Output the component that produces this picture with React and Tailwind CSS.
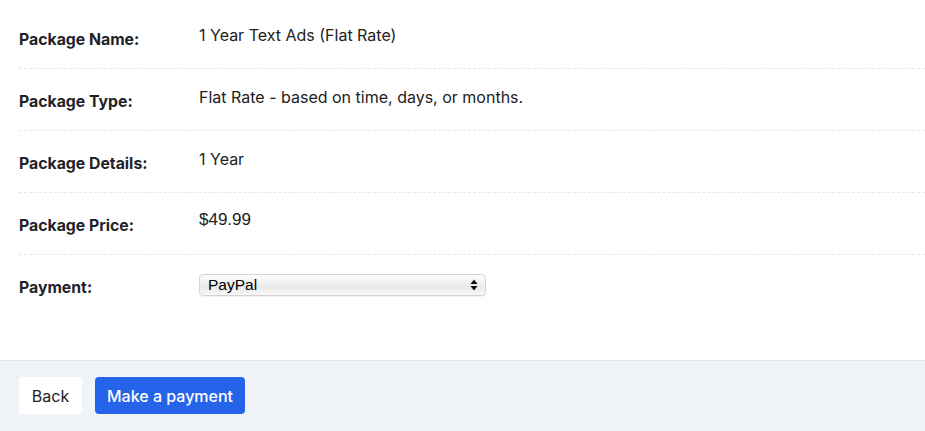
import React from "react";

const rows = [
  { label: "Package Name:", value: "1 Year Text Ads (Flat Rate)" },
  { label: "Package Type:", value: "Flat Rate - based on time, days, or months." },
  { label: "Package Details:", value: "1 Year" },
  { label: "Package Price:", value: "$49.99", arial: true },
];

export default function App() {
  return (
    <div className="w-[925px] h-[431px] bg-white flex flex-col overflow-hidden" style={{ fontFamily: "Inter, 'Noto Sans', sans-serif" }}>
      <div className="pt-[7px] pl-[19px] flex-1">
        {rows.map((r) => (
          <div key={r.label} className="h-[62px] border-b border-dashed border-[#e2e8f0] flex">
            <div className="w-[180px] pt-[23px] text-[15.8px] leading-[20px] font-bold text-[#1f2328]">{r.label}</div>
            <div
              className={r.arial ? "pt-[17px] text-[17px] leading-[20px] text-[#222]" : "pt-[18px] text-[16px] leading-[20px] text-[#222]"}
              style={r.arial ? { fontFamily: "'Liberation Sans', Arial, sans-serif" } : undefined}
            >
              {r.value}
            </div>
          </div>
        ))}
        <div className="h-[62px] flex">
          <div className="w-[180px] pt-[23px] text-[15.8px] leading-[20px] font-bold text-[#1f2328]">Payment:</div>
          <div className="pt-[19px]">
            <div className="relative w-[287px] h-[22px] rounded-[4px] border border-[#d4d4d4] bg-[linear-gradient(to_bottom,#fefefe_0%,#efefef_45%,#e9e9e9_55%,#f8f8f8_100%)] shadow-[0_1px_1px_rgba(0,0,0,0.06)] flex items-center pl-[8px]">
              <span className="text-[15.5px] leading-[20px] text-black" style={{ fontFamily: "'Liberation Sans', Arial, sans-serif" }}>PayPal</span>
              <svg className="absolute right-[7px] top-[4px]" width="8" height="12" viewBox="0 0 8 12">
                <path d="M4 0.5 L7.5 5 L0.5 5 Z" fill="#111" />
                <path d="M4 11.5 L7.5 7 L0.5 7 Z" fill="#111" />
              </svg>
            </div>
          </div>
        </div>
      </div>
      <div className="h-[71px] border-t border-[#e2e8f0] bg-[#f0f4f9] pl-[19px] pt-[16px] flex gap-[13px] items-start">
        <button className="h-[37px] w-[63px] rounded-[4px] bg-white text-[16px] text-[#222]">Back</button>
        <button className="h-[37px] w-[150px] rounded-[4px] bg-[#2563eb] text-[16px] text-white font-medium">Make a payment</button>
      </div>
    </div>
  );
}
